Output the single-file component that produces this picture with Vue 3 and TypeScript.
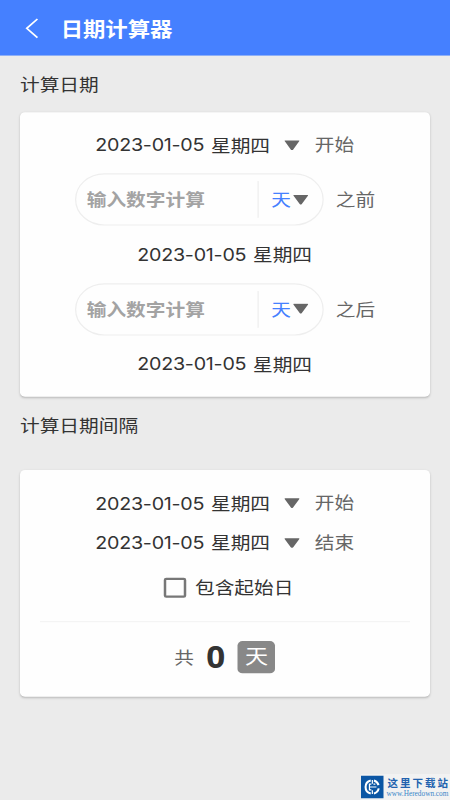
<script setup lang="ts">
import { ref } from 'vue'

const today = '2023-01-05'
const weekday = '星期四'
const offsets = [
  { key: 'before', label: '之前' },
  { key: 'after', label: '之后' },
]
const range = [
  { key: 'start', label: '开始' },
  { key: 'end', label: '结束' },
]
const includeStart = ref(false)
const total = ref(0)
</script>

<template>
  <div class="viewport">
    <div class="screen">
      <header class="bar">
        <svg class="back" viewBox="0 0 12 20"><path d="M10.4 1.2 1.4 10l9 8.8" /></svg>
        <h1>日期计算器</h1>
      </header>

      <h2 class="section first">计算日期</h2>
      <section class="card offset-card">
        <div class="row pick">
          <span class="date"><b>{{ today }}</b><i>{{ weekday }}</i></span>
          <svg class="tri" viewBox="0 0 14 10"><path d="M1.2.3h11.6q.9 0 .3.8L7.9 9q-.9 1-1.8 0L.9 1.1Q.3.3 1.2.3z" /></svg>
          <span class="tag">开始</span>
        </div>
        <template v-for="o in offsets" :key="o.key">
          <div class="row entry">
            <div class="pill">
              <span class="hint">输入数字计算</span>
              <span class="unit"><em>天</em><svg class="tri" viewBox="0 0 14 10"><path d="M1.2.3h11.6q.9 0 .3.8L7.9 9q-.9 1-1.8 0L.9 1.1Q.3.3 1.2.3z" /></svg></span>
            </div>
            <span class="tag">{{ o.label }}</span>
          </div>
          <div class="row result">
            <span class="date"><b>{{ today }}</b><i>{{ weekday }}</i></span>
          </div>
        </template>
      </section>

      <h2 class="section second">计算日期间隔</h2>
      <section class="card range-card">
        <div v-for="r in range" :key="r.key" class="row pick">
          <span class="date"><b>{{ today }}</b><i>{{ weekday }}</i></span>
          <svg class="tri" viewBox="0 0 14 10"><path d="M1.2.3h11.6q.9 0 .3.8L7.9 9q-.9 1-1.8 0L.9 1.1Q.3.3 1.2.3z" /></svg>
          <span class="tag">{{ r.label }}</span>
        </div>
        <div class="row include" @click="includeStart = !includeStart">
          <span class="box" :class="{ on: includeStart }"></span>
          <span>包含起始日</span>
        </div>
        <div class="row total">
          <span class="sum">共</span>
          <strong>{{ total }}</strong>
          <span class="badge">天</span>
        </div>
      </section>
    </div>

    <div class="mark">
      <svg class="logo" viewBox="0 0 24 24">
        <rect width="24" height="24" fill="#0b56a4" />
        <g fill="none" stroke="#fff" stroke-width="2.2">
          <path d="M10.4 5a7.2 7.2 0 0 0 0 14M13.8 5a7.2 7.2 0 0 1 4.9 5M18.9 13.5a7.2 7.2 0 0 1-5.1 5.5" />
          <path d="M12.1 4.5v4M12.1 15.5v4M8.5 12h8M11 9H9v6h2M13.3 9h2" stroke-width="1.3" />
        </g>
      </svg>
      <div class="mark-text">
        <span class="mark-name">这里下载站</span>
        <span class="mark-url">www.Heredown.com</span>
      </div>
    </div>
  </div>
</template>

<style>
body {
  margin: 0;
  background: #ebebeb;
}
</style>

<style scoped>
.viewport {
  position: relative;
  width: 450px;
  height: 800px;
  overflow: hidden;
  background: #ebebeb;
}
/* 360x720 layout units stretched over the window */
.screen {
  width: 360px;
  height: 720px;
  transform: scale(1.25, 1.11111);
  transform-origin: 0 0;
  font-family: "Noto Sans CJK SC", sans-serif;
  font-size: 15.75px;
  line-height: 20px;
  color: #333;
}
.bar {
  box-sizing: border-box;
  height: 50px;
  display: flex;
  align-items: center;
  padding-left: 20px;
  background: #4580ff;
  color: #fff;
}
.back {
  width: 11.5px;
  height: 19px;
  fill: none;
  stroke: #fff;
  stroke-width: 1.5;
}
h1 {
  margin: -1px 0 0 17px;
  font-size: 17.9px;
  font-weight: 700;
}
.section {
  margin: 0;
  padding-left: 16px;
  font-size: inherit;
  font-weight: 400;
}
.first {
  padding-top: 15.7px;
  height: 35.6px;
}
.second {
  padding-top: 15.9px;
  height: 50.3px;
}
.card {
  box-sizing: border-box;
  margin: 0 16px;
  background: #fefefe;
  border-radius: 4px;
  box-shadow: 0 1px 2px rgba(0, 0, 0, 0.22);
  display: flex;
  flex-direction: column;
}
.offset-card {
  height: 255.6px;
  padding: 4.6px 0;
}
.range-card {
  height: 204px;
  padding-top: 12px;
}
.row {
  display: flex;
  align-items: center;
  white-space: nowrap;
}
.offset-card .row {
  flex: 1;
}
.pick {
  padding-left: 60.2px;
}
.result {
  padding-left: 93.8px;
}
.range-card .pick {
  height: 35.6px;
}
.date {
  display: flex;
  align-items: center;
  height: 20px;
  width: 140px;
}
.date b {
  width: 92.6px;
  padding-top: 1.4px;
  font-family: Inter, sans-serif;
  font-weight: 400;
  letter-spacing: -0.2px;
}
.date i {
  font-style: normal;
}
.tri {
  width: 13.2px;
  height: 9.8px;
  fill: #666;
}
.pick .tri {
  margin-left: 10.9px;
}
.tag {
  margin-top: -1px;
  color: #666;
}
.pick .tag {
  margin-left: 11.5px;
}
.pill {
  box-sizing: border-box;
  width: 198.6px;
  height: 47px;
  margin-left: 44px;
  display: flex;
  align-items: center;
  border: 1px solid #eee;
  border-radius: 24px;
}
.hint {
  width: 136.6px;
  padding-left: 8.4px;
  margin-top: -1px;
  font-weight: 700;
  color: #a3a3a3;
}
.unit {
  height: 33px;
  display: flex;
  align-items: center;
  padding-left: 10px;
  border-left: 1px solid #eee;
  color: #4580ff;
}
.unit em {
  margin-top: -1px;
  font-style: normal;
}
.unit .tri {
  margin-left: 1.4px;
}
.entry .tag {
  margin-left: 10px;
}
.include {
  height: 45.4px;
  padding-left: 114.8px;
}
.box {
  box-sizing: border-box;
  width: 18.2px;
  height: 17.2px;
  margin-right: 7px;
  border: 2px solid #777;
  border-radius: 2px;
}
.box.on {
  background: #777;
}
.total {
  margin: 7.6px 16px 0;
  padding-left: 107.4px;
  height: 63.5px;
  border-top: 1px solid #f3f3f3;
}
.sum {
  color: #666;
}
.total strong {
  width: 25.2px;
  margin: -1.5px 0 0 9.9px;
  font-family: "Noto Sans", sans-serif;
  font-size: 26.5px;
}
.badge {
  width: 30.2px;
  height: 28.5px;
  margin-top: -0.6px;
  border-radius: 4px;
  background: #888;
  color: #fff;
  font-size: 18.5px;
  line-height: 27px;
  text-align: center;
}
.mark {
  position: absolute;
  right: 0;
  bottom: 0;
  width: 89px;
  height: 26px;
  display: flex;
  align-items: center;
  background: #f2f2f2;
}
.logo {
  width: 23.5px;
  height: 24px;
}
.mark-text {
  margin-left: 3px;
  display: flex;
  flex-direction: column;
  white-space: nowrap;
}
.mark-name {
  padding-left: 1px;
  font: 700 10.5px/13px "Noto Sans CJK SC", sans-serif;
  letter-spacing: 2px;
  color: #2262ae;
}
.mark-url {
  font: 7.3px/9px "Liberation Serif", serif;
  color: #3a86c8;
}
</style>
